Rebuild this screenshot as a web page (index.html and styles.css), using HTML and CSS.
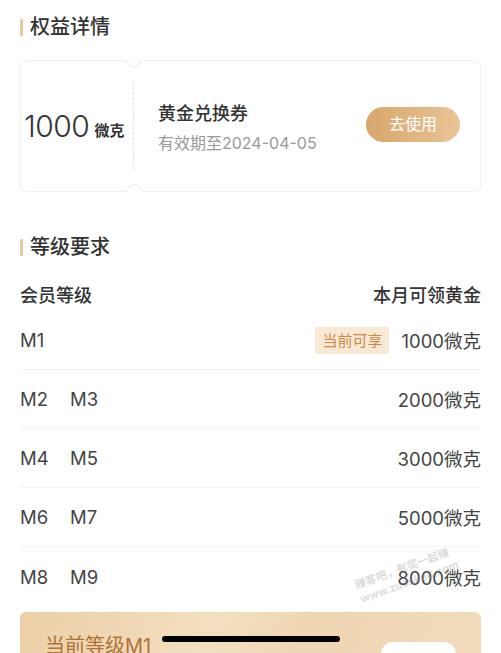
FILE: index.html
```html
<!DOCTYPE html>
<html>
    <head>
        <meta http-equiv="Content-Type" content="text/html; charset=UTF-8">
        <title>权益详情</title>
        <link rel="stylesheet" href="styles.css">
    </head>
    <body>
        <h2 class="title">权益详情</h2>
        <div class="coupon">
            <div class="coupon-amount">
                <span class="num">1000</span><span class="unit">微克</span>
            </div>
            <div class="coupon-info">
                <div class="coupon-name">黄金兑换券</div>
                <div class="coupon-date">有效期至2024-04-05</div>
            </div>
            <a class="use-btn">去使用</a>
        </div>

        <h2 class="title section">等级要求</h2>
        <div class="levels">
            <div class="levels-head">
                <span>会员等级</span>
                <span>本月可领黄金</span>
            </div>
            <div class="level-row">
                <div class="lv"><span>M1</span></div>
                <div class="gold"><span class="now">当前可享</span>1000微克</div>
            </div>
            <div class="level-row">
                <div class="lv"><span>M2</span><span>M3</span></div>
                <div class="gold">2000微克</div>
            </div>
            <div class="level-row">
                <div class="lv"><span>M4</span><span>M5</span></div>
                <div class="gold">3000微克</div>
            </div>
            <div class="level-row">
                <div class="lv"><span>M6</span><span>M7</span></div>
                <div class="gold">5000微克</div>
            </div>
            <div class="level-row">
                <div class="lv"><span>M8</span><span>M9</span></div>
                <div class="gold">8000微克</div>
            </div>
        </div>

        <div class="current">
            <div class="current-lv">当前等级M1</div>
            <div class="current-btn"></div>
        </div>

        <div class="watermark">赚客吧，有奖一起赚<br>www.zuanke8.com</div>
        <div class="home-bar"></div>
    </body>
</html>
```

FILE: styles.css
```css
body {
    margin: 0;
    padding: 13px 20px 0;
    background: #fff;
    color: #333;
    font-family: Inter, "Noto Sans CJK SC", sans-serif;
    height: 653px;
    box-sizing: border-box;
    overflow: hidden;
    position: relative;
}
.title {
    margin: 0;
    font-size: 20px;
    line-height: 28px;
    font-weight: 500;
    color: #333;
    display: flex;
    align-items: center;
}
.title::before {
    content: "";
    width: 3px;
    height: 17px;
    background: #e6c9a0;
    margin-right: 7px;
    border-radius: 1px;
}
.section {
    margin-top: 41px;
}

/* coupon */
.coupon {
    margin-top: 19px;
    height: 132px;
    box-sizing: border-box;
    border: 1px solid #f1f1f1;
    border-radius: 6px;
    display: flex;
    align-items: center;
    position: relative;
}
.coupon-amount {
    width: 113px;
    height: 88px;
    box-sizing: border-box;
    padding-left: 3px;
    border-right: 1px dashed #e4e4e4;
    display: flex;
    align-items: center;
}
.coupon-amount::before, .coupon-amount::after {
    content: "";
    position: absolute;
    left: 106px;
    width: 12px;
    height: 12px;
    border-radius: 50%;
    background: #fff;
    border: 1px solid transparent;
}
.coupon-amount::before {
    top: -7px;
    border-right-color: #ececec;
    border-bottom-color: #ececec;
    transform: rotate(45deg);
}
.coupon-amount::after {
    bottom: -7px;
    border-left-color: #ececec;
    border-top-color: #ececec;
    transform: rotate(45deg);
}
.num {
    font-size: 30px;
    font-weight: 300;
    color: #333;
    letter-spacing: -0.5px;
}
.unit {
    font-family: "Noto Sans CJK SC", sans-serif;
    font-size: 15px;
    font-weight: 700;
    margin-left: 5px;
    margin-top: 6px;
}
.coupon-info {
    flex: 1;
    padding-left: 24px;
    padding-top: 2px;
}
.coupon-name {
    font-size: 18px;
    font-weight: 500;
    line-height: 26px;
    color: #333;
}
.coupon-date {
    margin-top: 5px;
    font-size: 16px;
    line-height: 22px;
    color: #999;
}
.use-btn {
    width: 94px;
    height: 35px;
    line-height: 35px;
    margin-right: 20px;
    margin-top: -3px;
    text-align: center;
    border-radius: 18px;
    background: linear-gradient(90deg, #d7a66a, #e9c497);
    color: #fff;
    font-size: 16px;
}

/* levels */
.levels {
    margin-top: 21px;
}
.levels-head {
    display: flex;
    justify-content: space-between;
    font-size: 18px;
    font-weight: 500;
    line-height: 28px;
    height: 29px;
    color: #333;
}
.level-row {
    height: 59px;
    box-sizing: border-box;
    border-bottom: 1px solid #f2f2f2;
    display: flex;
    justify-content: space-between;
    align-items: center;
    font-size: 18.5px;
    color: #444;
}
.level-row:last-child {
    border-bottom: none;
}
.lv span {
    display: inline-block;
    width: 50px;
}
.gold {
    display: flex;
    align-items: center;
}
.now {
    background: #f9e8d3;
    color: #c98b45;
    font-size: 15px;
    line-height: 27px;
    padding: 0 7px;
    margin-right: 12px;
}

/* current level card */
.current {
    margin-top: 6px;
    height: 100px;
    border-radius: 6px;
    background: linear-gradient(110deg, #eccfa6 0%, #f3dfc0 40%, #efd6b2 60%, #f1dcbc 100%);
    padding: 20px 25px 0;
    box-sizing: border-box;
    display: flex;
    justify-content: space-between;
}
.current-lv {
    font-size: 20px;
    line-height: 28px;
    color: #ad7338;
}
.current-btn {
    width: 75px;
    height: 40px;
    margin-top: 10px;
    background: #fff;
    border-radius: 12px;
}

.watermark {
    position: absolute;
    left: 355px;
    top: 560px;
    transform: rotate(-20deg);
    font-size: 11px;
    font-weight: 700;
    line-height: 15px;
    color: rgba(150, 150, 150, 0.35);
    white-space: nowrap;
}
.home-bar {
    position: absolute;
    left: 162px;
    top: 636px;
    width: 178px;
    height: 6px;
    border-radius: 3px;
    background: #000;
}
```
